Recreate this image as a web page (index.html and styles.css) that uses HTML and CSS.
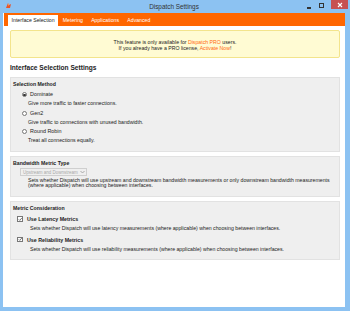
FILE: index.html
```html
<!DOCTYPE html>
<html lang="en">
<head>
    <meta charset="UTF-8">
    <title>Dispatch Settings</title>
    <link rel="stylesheet" href="styles.css">
</head>
<body>
    <div class="window">
        <div class="titlebar">
            <svg class="appicon" width="7" height="7" viewBox="0 0 7 7">
                <path d="M1 6 L3 1 L4 3 L6 2 L5 6 Z" fill="#e8542a"/>
                <path d="M3 1 L4 3 L3.2 4 Z" fill="#ffb060"/>
            </svg>
            <div class="title">Dispatch Settings</div>
            <div class="controls">
                <span class="min"></span>
                <span class="max"></span>
                <span class="close">
                    <svg width="6" height="6" viewBox="0 0 6 6">
                        <path d="M1 1 L5 5 M5 1 L1 5" stroke="#fff" stroke-width="1.1"/>
                    </svg>
                </span>
            </div>
        </div>
        <div class="client">
            <div class="tabs">
                <span class="tab active">Interface Selection</span>
                <span class="tab">Metering</span>
                <span class="tab">Applications</span>
                <span class="tab">Advanced</span>
            </div>
            <div class="main">
                <div class="notice">
                    <p>This feature is only available for <span class="hl">Dispatch PRO</span> users.</p>
                    <p>If you already have a PRO license, <span class="hl">Activate Now</span>!</p>
                </div>
                <h1>Interface Selection Settings</h1>

                <div class="group g1">
                    <div class="gtitle">Selection Method</div>
                    <div class="opt"><span class="radio on"></span>Dominate</div>
                    <div class="desc">Give more traffic to faster connections.</div>
                    <div class="opt"><span class="radio"></span>Gen2</div>
                    <div class="desc">Give traffic to connections with unused bandwidth.</div>
                    <div class="opt"><span class="radio"></span>Round Robin</div>
                    <div class="desc">Treat all connections equally.</div>
                </div>

                <div class="group g2">
                    <div class="gtitle">Bandwidth Metric Type</div>
                    <div class="select"><span>Upstream and Downstream</span>
                        <svg class="chev" viewBox="0 0 5 4"><path d="M0.5 1 L2.5 3 L4.5 1" fill="none" stroke="#999" stroke-width="0.8"/></svg>
                    </div>
                    <div class="longdesc">Sets whether Dispatch will use upstream and downstream bandwidth measurements or only downstream bandwidth measurements<br>(where applicable) when choosing between interfaces.</div>
                </div>

                <div class="group g3">
                    <div class="gtitle">Metric Consideration</div>
                    <div class="chk"><span class="box">
                        <svg class="tick" viewBox="0 0 5 5"><path d="M0.8 2.6 L2 3.8 L4.3 1" fill="none" stroke="#444" stroke-width="0.8"/></svg>
                    </span>Use Latency Metrics</div>
                    <div class="cdesc">Sets whether Dispatch will use latency measurements (where applicable) when choosing between interfaces.</div>
                    <div class="chk"><span class="box">
                        <svg class="tick" viewBox="0 0 5 5"><path d="M0.8 2.6 L2 3.8 L4.3 1" fill="none" stroke="#444" stroke-width="0.8"/></svg>
                    </span>Use Reliability Metrics</div>
                    <div class="cdesc">Sets whether Dispatch will use reliability measurements (where applicable) when choosing between interfaces.</div>
                </div>
            </div>
        </div>
    </div>
</body>
</html>
```

FILE: styles.css
```css
*{
    margin: 0;
    padding: 0;
    box-sizing: border-box;
}
body{
    width: 350px;
    height: 311px;
    overflow: hidden;
    font-family: "Liberation Sans", Arial, sans-serif;
    color: #222;
}
.window{
    width: 350px;
    height: 311px;
    background-color: #8cc2f2;
    display: flex;
    flex-direction: column;
    padding: 0 5px 4px 3px;
}
.titlebar{
    height: 13px;
    flex: none;
    position: relative;
    display: flex;
    align-items: center;
}
.appicon{
    margin-left: 2px;
    margin-top: -2px;
}
.title{
    position: absolute;
    left: 0;
    right: 0;
    top: 3px;
    text-align: center;
    font-size: 6.4px;
    line-height: 8px;
    color: #333;
}
.controls{
    position: absolute;
    right: -3px;
    top: 0;
    display: flex;
    align-items: flex-start;
}
.min{
    width: 4px;
    height: 1.5px;
    background-color: #333;
    margin-top: 7px;
    margin-right: 8px;
}
.max{
    width: 5px;
    height: 5px;
    border: 1px solid #333;
    border-top-width: 1.5px;
    margin-top: 3px;
    margin-right: 7px;
}
.close{
    width: 17px;
    height: 9px;
    background-color: #c75050;
    display: flex;
    align-items: center;
    justify-content: center;
}
.client{
    flex: 1;
    background-color: #fff;
    display: flex;
    flex-direction: column;
}
.tabs{
    height: 13px;
    background-color: #ff6600;
    display: flex;
    align-items: flex-end;
    padding-left: 4px;
    margin-left: 1px;
}
.tab{
    font-size: 5.2px;
    line-height: 11px;
    height: 11px;
    padding: 0 3.6px;
    margin-right: 1px;
    color: #fff;
}
.tab.active{
    background-color: #fff;
    color: #222;
}
.main{
    padding: 4px 5px 0 7px;
}
.notice{
    height: 28px;
    background-color: #fffbd3;
    border: 1px solid #f3e48c;
    border-radius: 2px;
    text-align: center;
    font-size: 5.2px;
    line-height: 6.5px;
    padding-top: 7.5px;
}
.hl{
    color: #ff6a10;
}
h1{
    font-size: 6.6px;
    line-height: 9px;
    font-weight: bold;
    margin: 5px 0 5px;
    color: #222;
}
.group{
    background-color: #efefef;
    border: 1px solid #e2e2e2;
    padding: 2px 2px 0 2px;
    margin-bottom: 4px;
}
.gtitle{
    font-size: 5.2px;
    font-weight: bold;
    line-height: 9px;
}
.g1{
    height: 75px;
}
.g1 .gtitle{
    margin-bottom: 1px;
}
.opt{
    font-size: 5.4px;
    line-height: 9.3px;
    display: flex;
    align-items: center;
    padding-left: 9px;
}
.radio{
    width: 5px;
    height: 5px;
    border: 0.6px solid #777;
    border-radius: 50%;
    background-color: #fff;
    margin-right: 3px;
    display: flex;
    align-items: center;
    justify-content: center;
}
.radio.on::after{
    content: "";
    width: 2.2px;
    height: 2.2px;
    border-radius: 50%;
    background-color: #333;
}
.desc{
    font-size: 5.2px;
    line-height: 9.3px;
    padding-left: 15px;
}
.g2{
    height: 41px;
}
.select{
    width: 67px;
    height: 8px;
    margin: 0 0 1px 7px;
    border: 0.6px solid #cfcfcf;
    font-size: 4.5px;
    line-height: 7px;
    color: #a8a8a8;
    padding-left: 2px;
    white-space: nowrap;
    display: flex;
    align-items: center;
    gap: 2.5px;
}
.chev{
    width: 5px;
    height: 4px;
    flex: none;
}
.longdesc{
    font-size: 5.2px;
    line-height: 5.2px;
    padding-left: 15px;
    padding-top: 1px;
}
.g3{
    height: 59px;
}
.g3 .gtitle{
    margin-bottom: 1px;
}
.chk{
    font-size: 5.3px;
    font-weight: bold;
    line-height: 10px;
    display: flex;
    align-items: center;
    padding-left: 4px;
}
.box{
    width: 5.5px;
    height: 5.5px;
    flex: none;
    border: 0.6px solid #777;
    background-color: #fff;
    margin-right: 4.5px;
    display: flex;
    align-items: center;
    justify-content: center;
}
.tick{
    width: 4.5px;
    height: 4.5px;
    flex: none;
    display: block;
}
.cdesc{
    font-size: 5.2px;
    line-height: 9.5px;
    padding-left: 17px;
    margin-bottom: 1px;
}
```
